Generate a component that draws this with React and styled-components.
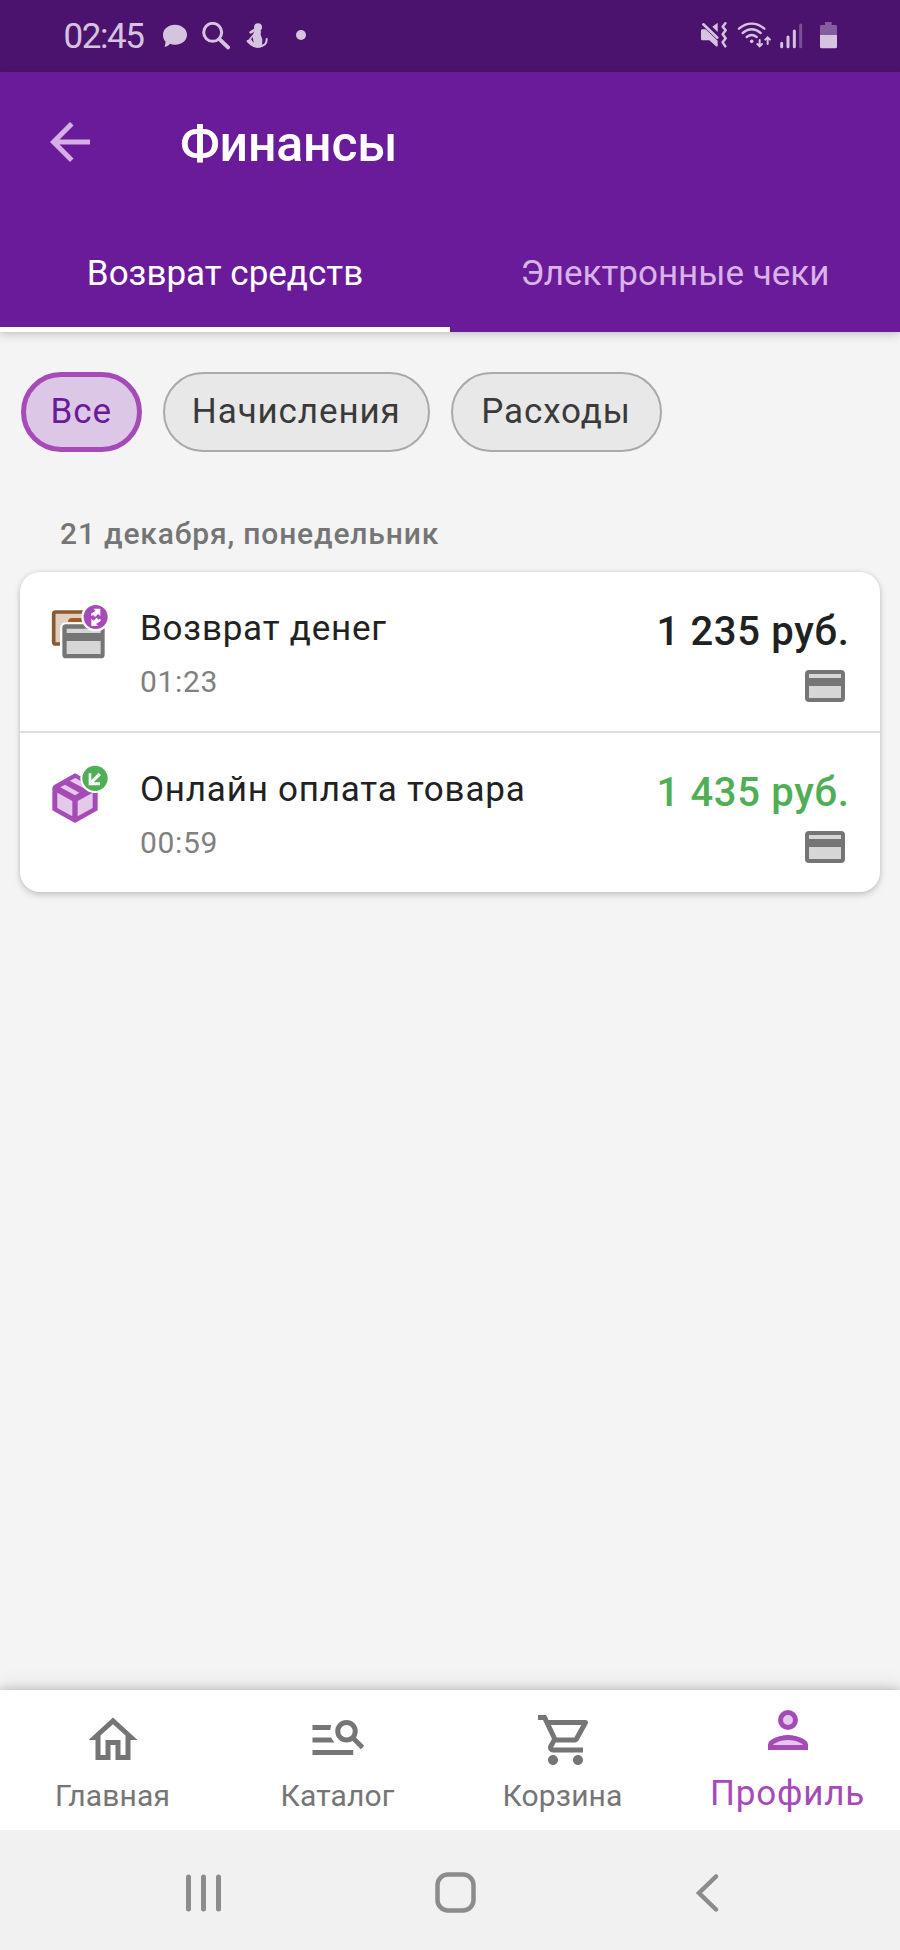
import React from "react";
import styled, { createGlobalStyle, ThemeProvider, css } from "styled-components";

const theme = {
  primary: "#6a1b9a",
  primaryDark: "#4b136e",
  accent: "#a64ab8",
  accentSoft: "#e5c9ea",
  surface: "#f4f4f4",
  text: "#212121",
  muted: "#757575",
  green: "#50ae55",
  status: "#d6c3df",
};

const GlobalStyle = createGlobalStyle`
  * { box-sizing: border-box; }
  body {
    margin: 0;
    font-family: Roboto, "Noto Sans", sans-serif;
    background: ${theme.surface};
  }
  svg { display: block; flex: none; }
  button { font: inherit; margin: 0; cursor: pointer; }
`;

const Screen = styled.div`
  width: 900px;
  height: 1950px;
  display: flex;
  flex-direction: column;
  overflow: hidden;
  background: ${(p) => p.theme.surface};
`;

/* ---------- status bar ---------- */

const StatusBar = styled.div`
  height: 72px;
  flex: none;
  display: flex;
  justify-content: space-between;
  padding: 22px 62px 0 63.5px;
  background: ${(p) => p.theme.primaryDark};
  color: ${(p) => p.theme.status};
`;

const StatusGroup = styled.div`
  display: flex;
  height: 28px;
`;

const Clock = styled.span`
  width: 98.5px;
  font-size: 35px;
  letter-spacing: -1.45px;
  line-height: 30px;
`;

const StatusIcon = styled.svg`
  width: ${(p) => p.$w}px;
  height: 28px;
  margin-left: ${(p) => p.$gap || 0}px;
`;

/* ---------- header ---------- */

const Header = styled.header`
  height: 260px;
  flex: none;
  position: relative;
  display: flex;
  flex-direction: column;
  background: ${(p) => p.theme.primary};
  color: #fff;
  box-shadow: 0 3px 9px rgba(0, 0, 0, 0.17), 0 1px 3px rgba(0, 0, 0, 0.06);
`;

const Toolbar = styled.div`
  height: 140px;
  display: flex;
  align-items: center;
  padding: 0 40px;
`;

const BackButton = styled.button`
  width: 140px;
  padding: 0;
  border: 0;
  background: none;
  color: #d5afe5;
`;

const Title = styled.h1`
  margin: 4px 0 0;
  font-size: 50px;
  font-weight: 500;
  line-height: 60px;
  letter-spacing: -0.2px;
`;

const Tabs = styled.nav`
  height: 120px;
  display: grid;
  grid-template-columns: 1fr 1fr;
`;

const Tab = styled.button`
  padding: 8px 0 0;
  border: 0;
  border-bottom: 5px solid ${(p) => (p.$active ? "#fff" : p.theme.primary)};
  background: none;
  color: ${(p) => (p.$active ? "#fff" : "#d9b3e8")};
  font-size: 35px;
  line-height: 42px;
  text-align: center;
`;

/* ---------- content ---------- */

const Content = styled.main`
  flex: 1;
  padding: 39.5px 20px 0;
`;

const Chips = styled.div`
  display: flex;
  gap: 20.5px;
  padding-left: 0.5px;
`;

const Chip = styled.button`
  height: 80px;
  width: ${(p) => p.$width}px;
  padding: 1px 0 0;
  border: 2px solid #a9a9a9;
  border-radius: 40px;
  background: #e8e8e8;
  color: #3a3a3a;
  font-size: 35px;
  letter-spacing: 0.88px;
  line-height: 42px;
  ${(p) =>
    p.$active &&
    css`
      border: 5px solid ${p.theme.accent};
      background: #dcc8e6;
      color: ${p.theme.primary};
    `}
`;

const DayLabel = styled.h2`
  margin: 64px 0 20.5px 40px;
  font-size: 30px;
  font-weight: 500;
  letter-spacing: 0.84px;
  line-height: 36px;
  color: ${(p) => p.theme.muted};
`;

const Card = styled.section`
  border-radius: 20px;
  background: #fff;
  box-shadow: 0 3px 7px rgba(0, 0, 0, 0.17), 0 0 4px rgba(0, 0, 0, 0.1);
`;

const Operation = styled.article`
  height: 161px;
  display: flex;
  padding: 31px 33px 0 30px;
  & + & {
    height: 159px;
  }
  &:first-child {
    border-bottom: 2px solid #dedede;
  }
`;

const OperationText = styled.div`
  flex: 1;
  margin-left: 30px;
`;

const OperationTitle = styled.div`
  margin-top: 5px;
  font-size: 35px;
  line-height: 42px;
  letter-spacing: 0.78px;
  color: ${(p) => p.theme.text};
`;

const OperationTime = styled.div`
  margin-top: 14px;
  font-size: 30px;
  line-height: 36px;
  letter-spacing: 0.65px;
  color: #808080;
`;

const OperationSide = styled.div`
  display: flex;
  flex-direction: column;
  align-items: flex-end;
`;

const Amount = styled.div`
  margin: 5px -2.5px 0 0;
  font-size: 40px;
  font-weight: 500;
  line-height: 48px;
  letter-spacing: 0.68px;
  color: ${(p) => (p.$income ? p.theme.green : p.theme.text)};
`;

const PaymentIcon = styled.svg`
  width: 40px;
  height: 32px;
  margin: 14px 2px 0 0;
`;

/* ---------- bottom bars ---------- */

const BottomNav = styled.nav`
  height: 140px;
  flex: none;
  position: relative;
  display: grid;
  grid-template-columns: repeat(4, 1fr);
  background: #fff;
  box-shadow: 0 -2px 8px rgba(0, 0, 0, 0.15), 0 -3px 20px rgba(0, 0, 0, 0.1);
`;

const NavItem = styled.button`
  display: flex;
  flex-direction: column;
  align-items: center;
  padding: ${(p) => (p.$active ? "10px" : "20px")} 0 0;
  border: 0;
  background: none;
  color: ${(p) => (p.$active ? p.theme.accent : "#757575")};
`;

const NavLabel = styled.span`
  margin-top: ${(p) => (p.$active ? 13 : 8)}px;
  font-size: ${(p) => (p.$active ? 35 : 30)}px;
  line-height: ${(p) => (p.$active ? 42 : 36)}px;
  letter-spacing: ${(p) => (p.$active ? 0.8 : 0.15)}px;
`;

const SystemBar = styled.div`
  height: 120px;
  flex: none;
  position: relative;
  display: flex;
  align-items: center;
  gap: 212px;
  padding: 5px 0 0 185px;
  background: #f1f1f1;
  color: #8c8c8c;
`;

const BackChevron = styled.svg`
  width: 23px;
  height: 40px;
  margin-left: 8px;
`;

/* ---------- drawings ---------- */

const StatusIcons = () => (
  <>
    <StatusGroup>
      <Clock>02:45</Clock>
      <StatusIcon $w={26} viewBox="486 66 78 84" fill="currentColor">
        <path d="M525 74c20 0 36 13 36 30s-16 30-36 30c-6 0-11-1-15-3-4 5-9 8-16 10l3-16c-5-5-8-12-8-21 0-17 16-30 36-30z" />
      </StatusIcon>
      <StatusIcon $w={30} $gap={13} viewBox="603 66 90 84" fill="none" stroke="currentColor">
        <circle cx="638" cy="97" r="27" strokeWidth="9" />
        <path d="M659 118l25 24" strokeWidth="12" strokeLinecap="round" />
      </StatusIcon>
      <StatusIcon $w={23} $gap={15} viewBox="738 66 69 84" fill="currentColor">
        <circle cx="774" cy="82" r="12" />
        <path d="M764 92h19l-1 12 5 14-1 22c-9 5-21 4-28-3l-18-12 19-22z" />
        <path d="M752 97l12-7" stroke="currentColor" strokeWidth="8" strokeLinecap="round" />
        <path d="M800 117c1 14-8 22-26 23-12 0-22-6-31-17" fill="none" stroke="currentColor" strokeWidth="6" strokeLinecap="round" />
        <path d="M753 118l5-7 3 17z" fill={theme.primaryDark} />
      </StatusIcon>
      <StatusIcon $w={12} $gap={26} viewBox="885 66 36 84" fill="currentColor">
        <circle cx="903" cy="105" r="15" />
      </StatusIcon>
    </StatusGroup>
    <StatusGroup>
      <StatusIcon $w={27} viewBox="753 66 81 84" fill="currentColor">
        <path d="M757 88h10l36 34v16q-2 3-5 1l-20-18h-21q-4 0-4-4V92q0-4 4-4z" />
        <path d="M803 68v28l-16-16z" />
        <path d="M760 73l42 40" stroke="currentColor" strokeWidth="8" strokeLinecap="round" />
        <path d="M826 70l-8 10 9 11-9 12 9 12-9 12 8 12" fill="none" stroke="currentColor" strokeWidth="7.5" strokeLinecap="round" strokeLinejoin="round" />
      </StatusIcon>
      <StatusIcon $w={35} $gap={9} viewBox="861 66 105 84" fill="none" stroke="currentColor" strokeWidth="7" strokeLinecap="round">
        <path d="M867 86c23-20 53-20 76 0M878 99c17-14 37-14 54 0M890 111c10-8 20-8 30 0" />
        <circle cx="905" cy="124" r="5.5" fill="currentColor" stroke="none" />
        <path d="M929 120v18M922 132l7 7 7-7M953 132v-18M946 119l7-7 7 7" strokeWidth="6" />
      </StatusIcon>
      <StatusIcon $w={24} $gap={7} viewBox="987 66 72 84" fill="none" stroke="currentColor" strokeWidth="9" strokeLinecap="round">
        <path d="M995 130v10M1014 111v29M1033 93v47" />
        <path d="M1052 75v65" opacity="0.35" />
      </StatusIcon>
      <StatusIcon $w={19} $gap={16} viewBox="1107 66 57 84" fill="currentColor">
        <path d="M1125 66h20v9h12q4 0 4 4v27h-51V79q0-4 4-4h11z" opacity="0.42" />
        <path d="M1110 105h51v35q0 5-5 5h-41q-5 0-5-5z" />
      </StatusIcon>
    </StatusGroup>
  </>
);

const BackArrow = () => (
  <svg width="60" height="60" viewBox="0 0 24 24" fill="currentColor">
    <path d="M20 11H7.83l5.59-5.59L12 4l-8 8 8 8 1.41-1.41L7.83 13H20v-2z" />
  </svg>
);

const swapArrow = "M280 146h21v22l-7-6-9 9-5-6-6 3-1-7 14-9z";

const RefundIcon = () => (
  <svg width="60" height="60" viewBox="150 129 180 180">
    <path d="M163 157h88v94h-88z" fill="#e1cfc2" />
    <path d="M180 252h-12q-7 0-7-7v-82q0-7 7-7h82" fill="none" stroke="#8b5a2f" strokeWidth="11" />
    <path d="M204 184q2-10 12-10h32v12h-44z" fill="#a15a28" />
    <rect x="180" y="187" width="140" height="114" rx="16" fill="#fff" />
    <rect x="187" y="193" width="127" height="102" rx="11" fill="#757575" />
    <path d="M200 206h102v13H200zM200 243h102v39H200z" fill="#d6d6d6" />
    <circle cx="287" cy="171" r="43" fill="#fff" />
    <circle cx="287" cy="171" r="36" fill={theme.accent} />
    <path d={swapArrow} fill="#fff" />
    <path d={swapArrow} transform="rotate(180 287.500 172)" fill="#fff" />
  </svg>
);

const ParcelIcon = () => (
  <svg width="60" height="60" viewBox="150 612 180 180">
    <path d="M225 640l62 34q6 3 6 9v68l-68 38-68-38v-66q0-8 7-11z" fill={theme.accent} />
    <path d="M172 698l45 25v46l-45-25zM278 698l-45 25v46l45-25z" fill={theme.accentSoft} />
    <path d="M181 682l14-8 43 24-13 8zM209 662l17-8 45 25-15 8z" fill={theme.accentSoft} />
    <circle cx="285" cy="655" r="44" fill="#fff" />
    <circle cx="285" cy="655" r="38" fill={theme.green} />
    <path d="M266 640h8v21l22-23 7 7-22 22h19v9h-34z" fill="#fff" />
  </svg>
);

const CardIcon = () => (
  <PaymentIcon viewBox="0 0 40 32">
    <rect width="40" height="32" rx="4" fill="#757575" />
    <path d="M4 4h32v4H4zM4 16h32v12H4z" fill="#d6d6d6" />
  </PaymentIcon>
);

const HomeIcon = () => (
  <svg width="60" height="60" viewBox="0 0 24 24" fill="currentColor">
    <path d="M12 5.69l5 4.5V18h-2v-6H9v6H7v-7.81l5-4.5M12 3L2.2 12H5v8h6v-6h2v6h6v-8h2.8L12 3z" />
  </svg>
);

const CatalogIcon = () => (
  <svg width="60" height="60" viewBox="0 0 24 24" fill="currentColor">
    <path d="M1.8 6h7.5a6.5 6.5 0 0 0-.4 2H1.8zM1.8 11h7.5a6 6 0 0 0 1.300 2H1.8zM1.8 16h16.3v2H1.8z" />
    <circle cx="15.4" cy="8.5" r="3.5" fill="none" stroke="currentColor" strokeWidth="2" />
    <path d="M17.8 11l4 4" fill="none" stroke="currentColor" strokeWidth="1.9" />
  </svg>
);

const CartIcon = () => (
  <svg width="60" height="60" viewBox="-1 0 24 24" fill="currentColor">
    <path d="M15.55 13c.75 0 1.41-.41 1.75-1.03l3.58-6.49A.996.996 0 0 0 20.01 4H5.21l-.94-2H1v2h2l3.6 7.59-1.35 2.44C4.52 15.37 5.48 17 7 17h12v-2H7l1.1-2h7.45zM6.16 6h12.15l-2.76 5H8.53L6.16 6zM7 18c-1.1 0-1.99.9-1.99 2S5.9 22 7 22s2-.9 2-2-.9-2-2-2zm10 0c-1.1 0-1.99.9-1.99 2s.89 2 1.99 2 2-.9 2-2-.9-2-2-2z" />
  </svg>
);

const ProfileIcon = () => (
  <svg width="60" height="60" viewBox="0 0 24 24" fill="currentColor">
    <circle cx="12" cy="8" r="3" fill={theme.accentSoft} stroke="currentColor" strokeWidth="2" />
    <path d="M12 14c-2.67 0-8 1.34-8 4v2h16v-2c0-2.66-5.33-4-8-4z" />
    <path d="M6 18h12c-.22-.72-3.31-2-6-2-2.7 0-5.8 1.29-6 2z" fill={theme.accentSoft} />
  </svg>
);

const operations = [
  { title: "Возврат денег", time: "01:23", amount: "1 235 руб.", Icon: RefundIcon },
  { title: "Онлайн оплата товара", time: "00:59", amount: "1 435 руб.", Icon: ParcelIcon, income: true },
];

const navItems = [
  { label: "Главная", Icon: HomeIcon },
  { label: "Каталог", Icon: CatalogIcon },
  { label: "Корзина", Icon: CartIcon },
  { label: "Профиль", Icon: ProfileIcon, active: true },
];

export default function App() {
  return (
    <ThemeProvider theme={theme}>
      <GlobalStyle />
      <Screen>
        <StatusBar>
          <StatusIcons />
        </StatusBar>
        <Header>
          <Toolbar>
            <BackButton aria-label="Назад">
              <BackArrow />
            </BackButton>
            <Title>Финансы</Title>
          </Toolbar>
          <Tabs>
            <Tab $active>Возврат средств</Tab>
            <Tab>Электронные чеки</Tab>
          </Tabs>
        </Header>
        <Content>
          <Chips>
            <Chip $active $width={121.5}>Все</Chip>
            <Chip $width={267.5}>Начисления</Chip>
            <Chip $width={211}>Расходы</Chip>
          </Chips>
          <DayLabel>21 декабря, понедельник</DayLabel>
          <Card>
            {operations.map(({ title, time, amount, Icon, income }) => (
              <Operation key={title}>
                <Icon />
                <OperationText>
                  <OperationTitle>{title}</OperationTitle>
                  <OperationTime>{time}</OperationTime>
                </OperationText>
                <OperationSide>
                  <Amount $income={income}>{amount}</Amount>
                  <CardIcon />
                </OperationSide>
              </Operation>
            ))}
          </Card>
        </Content>
        <BottomNav>
          {navItems.map(({ label, Icon, active }) => (
            <NavItem key={label} $active={active}>
              <Icon />
              <NavLabel $active={active}>{label}</NavLabel>
            </NavItem>
          ))}
        </BottomNav>
        <SystemBar>
          <svg width="38" height="40" viewBox="0 0 38 40" fill="currentColor">
            <rect x="1" y="1.5" width="5" height="37" rx="2.5" />
            <rect x="16" y="1.5" width="5" height="37" rx="2.5" />
            <rect x="31" y="1.5" width="5" height="37" rx="2.5" />
          </svg>
          <svg width="41" height="41" viewBox="0 0 41 41" fill="none" stroke="currentColor" strokeWidth="4.5">
            <rect x="2.5" y="2.5" width="36" height="36" rx="10.5" />
          </svg>
          <BackChevron viewBox="0 0 23 40" fill="none" stroke="currentColor" strokeWidth="4.5" strokeLinecap="round">
            <path d="M20 3.5L3 20l17 16.500" />
          </BackChevron>
        </SystemBar>
      </Screen>
    </ThemeProvider>
  );
}
